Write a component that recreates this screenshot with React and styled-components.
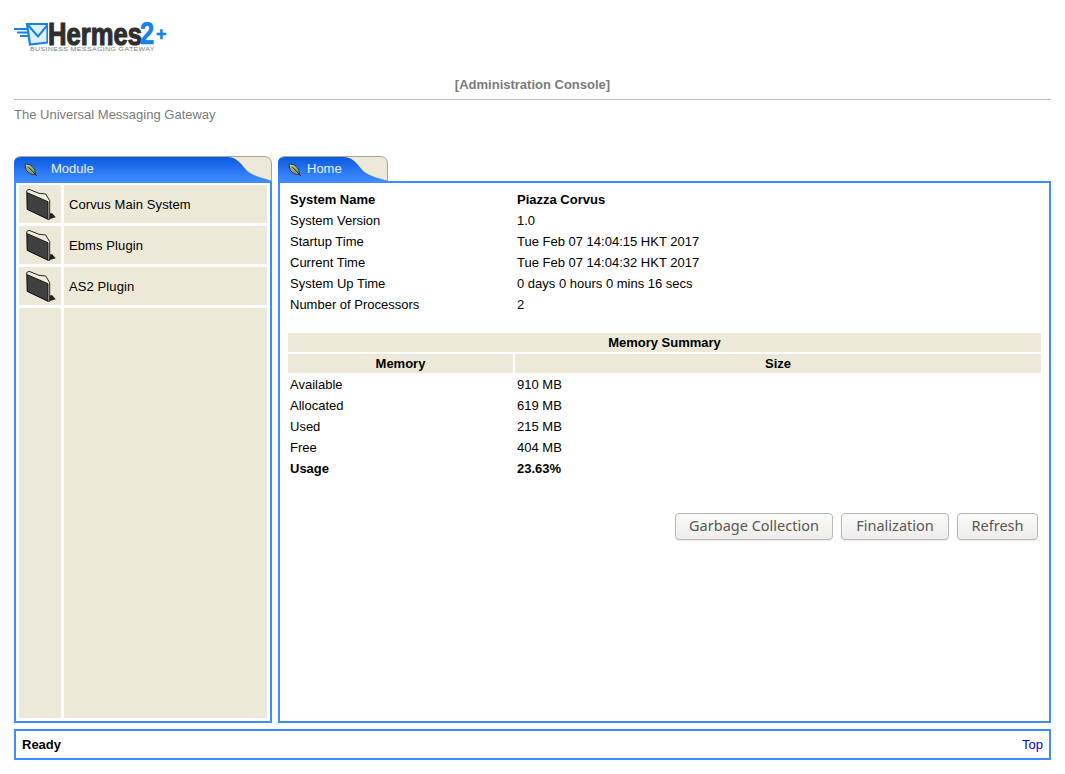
import React from 'react';
import styled, { createGlobalStyle } from 'styled-components';

const GlobalStyle = createGlobalStyle`
  html, body {
    margin: 0;
    padding: 0;
    background: #fff;
  }
  body {
    font-family: "Liberation Sans", Arial, sans-serif;
    font-size: 13px;
    color: #000;
  }
`;

const Page = styled.div`
  box-sizing: border-box;
  width: 100%;
  height: 774px;
  padding: 0 14px;
  display: flex;
  flex-direction: column;
`;

const LogoWrap = styled.div`
  box-sizing: border-box;
  height: 63px;
  padding-top: 22px;
  display: flex;
  flex-direction: column;
`;

const LogoTop = styled.div`
  display: flex;
  align-items: center;
  height: 24px;
`;

const LogoWord = styled.span`
  display: inline-block;
  width: 92px;
  font-size: 32px;
  line-height: 24px;
  font-weight: 700;
  color: #2f2f2f;
  -webkit-text-stroke: 1.2px #2f2f2f;
  transform: scaleX(0.8);
  transform-origin: left center;
  white-space: nowrap;
`;

const LogoTwo = styled.span`
  display: inline-block;
  width: 16px;
  font-size: 31px;
  line-height: 24px;
  font-weight: 700;
  color: #1582e8;
  -webkit-text-stroke: 0.7px #1582e8;
  transform: scaleX(0.82);
  transform-origin: left center;
`;

const LogoPlus = styled.span`
  font-size: 18px;
  line-height: 18px;
  font-weight: 700;
  color: #1582e8;
  -webkit-text-stroke: 0.6px #1582e8;
`;

const LogoTag = styled.div`
  align-self: flex-start;
  margin-left: 16px;
  font-size: 6px;
  line-height: 7px;
  letter-spacing: 0.3px;
  color: #7c7c7c;
  white-space: nowrap;
  transform: scaleX(1.17);
  transform-origin: left center;
`;

const ConsoleTitle = styled.div`
  margin-top: 14px;
  height: 22px;
  line-height: 16px;
  text-align: center;
  font-weight: 700;
  color: #7b7b7b;
  border-bottom: 1px solid #bdbdbd;
`;

const Tagline = styled.div`
  margin-top: 7px;
  height: 16px;
  line-height: 16px;
  color: #7b7b7b;
`;

const Workspace = styled.div`
  margin-top: 33px;
  display: grid;
  grid-template-columns: 258px 773px;
  column-gap: 6px;
  height: 567px;
`;

const Column = styled.div`
  display: flex;
  flex-direction: column;
  min-height: 0;
`;

const TabShape = styled.div`
  position: relative;
  width: ${(p) => p.$width}px;
  height: 25px;
  display: flex;
  align-items: center;
  flex: none;
`;

const TabArt = styled.svg`
  position: absolute;
  left: 0;
  top: 0;
`;

const TabIcon = styled.svg`
  position: relative;
  margin-left: 10px;
  margin-top: 2px;
`;

const TabLabel = styled.span`
  position: relative;
  margin-left: ${(p) => p.$gap}px;
  color: #e8f1ff;
`;

const Panel = styled.div`
  flex: 1;
  border: 2px solid #3f8cff;
  min-height: 0;
  box-sizing: border-box;
`;

const MenuGrid = styled.div`
  height: 100%;
  box-sizing: border-box;
  padding: 2px 2px 3px 3px;
  display: grid;
  grid-template-columns: 42px 203px;
  grid-template-rows: 38px 38px 38px 1fr;
  gap: 3px;
`;

const MenuIconCell = styled.div`
  background: #ece9d8;
  display: flex;
  align-items: flex-start;
  justify-content: center;
`;

const MenuTextCell = styled.div`
  background: #ece9d8;
  display: flex;
  align-items: center;
  padding-left: 5px;
  letter-spacing: 0.1px;
  color: #000;
`;

const InfoGrid = styled.div`
  display: grid;
  grid-template-columns: 225px 526px;
  grid-auto-rows: 19px;
  gap: 2px;
  padding: ${(p) => p.$top}px 0 0 8px;
`;

const Cell = styled.div`
  padding-left: 2px;
  line-height: 19px;
  font-weight: ${(p) => (p.$bold ? 700 : 400)};
  white-space: nowrap;
`;

const HeadCell = styled.div`
  background: #ece9d8;
  text-align: center;
  font-weight: 700;
  line-height: 19px;
  grid-column: ${(p) => (p.$wide ? '1 / -1' : 'auto')};
`;

const ButtonRow = styled.div`
  display: flex;
  justify-content: flex-end;
  gap: 8px;
  margin-top: 35px;
  padding-right: 11px;
`;

const ActionButton = styled.button`
  height: 27px;
  width: ${(p) => p.$width}px;
  padding: 0 0 3px;
  border: 1px solid #b9b6b1;
  border-radius: 4px;
  background: linear-gradient(#fbfbfa, #eeedeb);
  box-shadow: 0 1px 1px rgba(0, 0, 0, 0.08);
  font-family: "Noto Sans", "Open Sans", sans-serif;
  font-size: 14.5px;
  color: #5a5650;
`;

const StatusBar = styled.div`
  margin-top: 6px;
  height: 31px;
  box-sizing: border-box;
  border: 2px solid #3f8cff;
  padding: 0 6px;
  display: flex;
  align-items: center;
  justify-content: space-between;
`;

const StatusText = styled.span`
  font-weight: 700;
`;

const TopLink = styled.a`
  color: #0000ee;
  text-decoration: none;
`;

const FolderIcon = styled.svg`
  margin-top: 3px;
`;

const Tab = ({ width, id, gap, label }) => (
  <TabShape $width={width}>
    <TabArt width={width} height="25" viewBox={`0 0 ${width} 25`}>
      <defs>
        <linearGradient id={id} x1="0" y1="0" x2="0" y2="1">
          <stop offset="0" stopColor="#0a5ae0" />
          <stop offset="1" stopColor="#3f8cff" />
        </linearGradient>
      </defs>
      <path
        d={`M0.5 25 V7 Q0.5 0.5 7 0.5 H${width - 8} Q${width - 0.5} 0.5 ${width - 0.5} 8 V25 Z`}
        fill="#ece9d8"
        stroke="#a9a596"
      />
      <path
        d={`M0 25 V7 Q0 1 7 1 H${width - 44} C${width - 34} 1 ${width - 30} 10 ${width - 24} 15.7 C${width - 18} 20 ${width - 10} 22 ${width - 3} 24 L${width} 25 Z`}
        fill={`url(#${id})`}
      />
    </TabArt>
    <TabIcon width="14" height="14" viewBox="0 0 14 14">
      <path d="M1 1.5 C5 0 9.5 3 11 8 L11.5 11.5 C7 12 2.5 9 1.5 5 Z" fill="#7fb58a" stroke="#26332b" strokeWidth="1" />
      <path d="M2 2.5 C4 2.5 5.5 4 6.5 5.5" fill="none" stroke="#e3c6b0" strokeWidth="1.4" />
      <path d="M2.5 5.5 C4 7 5.5 8.5 7.5 9.5" fill="none" stroke="#c9808f" strokeWidth="1.2" />
      <path d="M4 3.5 L13 13" stroke="#161616" strokeWidth="1" />
    </TabIcon>
    <TabLabel $gap={gap}>{label}</TabLabel>
  </TabShape>
);

const Folder = () => (
  <FolderIcon width="32" height="34" viewBox="0 0 32 34">
    <path d="M25 31.3 L31.7 29.3 L28.3 25.3 L25.7 25.3 Z" fill="#222" />
    <path d="M2.7 2.7 L5 1.3 L15 5.3 L21.7 6 L25.7 12.7 V31.3 H24 L3.3 21.3 Z" fill="#efecdd" stroke="#111" strokeWidth="0.9" />
    <path d="M3.3 4.7 L24 13.7 V31 L3.3 21.3 Z" fill="#404040" stroke="#111" strokeWidth="0.9" />
  </FolderIcon>
);

const modules = ['Corvus Main System', 'Ebms Plugin', 'AS2 Plugin'];

const systemInfo = [
  ['System Name', 'Piazza Corvus', true],
  ['System Version', '1.0'],
  ['Startup Time', 'Tue Feb 07 14:04:15 HKT 2017'],
  ['Current Time', 'Tue Feb 07 14:04:32 HKT 2017'],
  ['System Up Time', '0 days 0 hours 0 mins 16 secs'],
  ['Number of Processors', '2'],
];

const memoryInfo = [
  ['Available', '910 MB'],
  ['Allocated', '619 MB'],
  ['Used', '215 MB'],
  ['Free', '404 MB'],
  ['Usage', '23.63%', true],
];

const InfoRows = ({ rows }) =>
  rows.map(([label, value, bold]) => (
    <React.Fragment key={label}>
      <Cell $bold={bold}>{label}</Cell>
      <Cell $bold={bold}>{value}</Cell>
    </React.Fragment>
  ));

const App = () => {
  return (
    <Page>
      <GlobalStyle />
      <LogoWrap>
        <LogoTop>
          <svg width="34" height="24" viewBox="0 0 34 24">
            <path d="M0 7 H14 M3 10.5 H15 M6 14 H16" stroke="#1582e8" strokeWidth="1.8" fill="none" />
            <path d="M13 2 H33.5 V20.5 L16 22.5 Z" fill="#dff0fd" stroke="#1582e8" strokeWidth="2.2" />
            <path d="M13 2 L24 14.5 L33.5 3" fill="none" stroke="#1582e8" strokeWidth="2" />
          </svg>
          <LogoWord>Hermes</LogoWord>
          <LogoTwo>2</LogoTwo>
          <LogoPlus>+</LogoPlus>
        </LogoTop>
        <LogoTag>BUSINESS MESSAGING GATEWAY</LogoTag>
      </LogoWrap>
      <ConsoleTitle>[Administration Console]</ConsoleTitle>
      <Tagline>The Universal Messaging Gateway</Tagline>
      <Workspace>
        <Column>
          <Tab width={258} id="moduleTab" gap={13} label="Module" />
          <Panel>
            <MenuGrid>
              {modules.map((name) => (
                <React.Fragment key={name}>
                  <MenuIconCell>
                    <Folder />
                  </MenuIconCell>
                  <MenuTextCell>{name}</MenuTextCell>
                </React.Fragment>
              ))}
              <MenuIconCell />
              <MenuTextCell />
            </MenuGrid>
          </Panel>
        </Column>
        <Column>
          <Tab width={110} id="homeTab" gap={5} label="Home" />
          <Panel>
            <InfoGrid $top={7}>
              <InfoRows rows={systemInfo} />
            </InfoGrid>
            <InfoGrid $top={19}>
              <HeadCell $wide>Memory Summary</HeadCell>
              <HeadCell>Memory</HeadCell>
              <HeadCell>Size</HeadCell>
              <InfoRows rows={memoryInfo} />
            </InfoGrid>
            <ButtonRow>
              <ActionButton $width={158}>Garbage Collection</ActionButton>
              <ActionButton $width={108}>Finalization</ActionButton>
              <ActionButton $width={81}>Refresh</ActionButton>
            </ButtonRow>
          </Panel>
        </Column>
      </Workspace>
      <StatusBar>
        <StatusText>Ready</StatusText>
        <TopLink href="#top">Top</TopLink>
      </StatusBar>
    </Page>
  );
};

export default App;
